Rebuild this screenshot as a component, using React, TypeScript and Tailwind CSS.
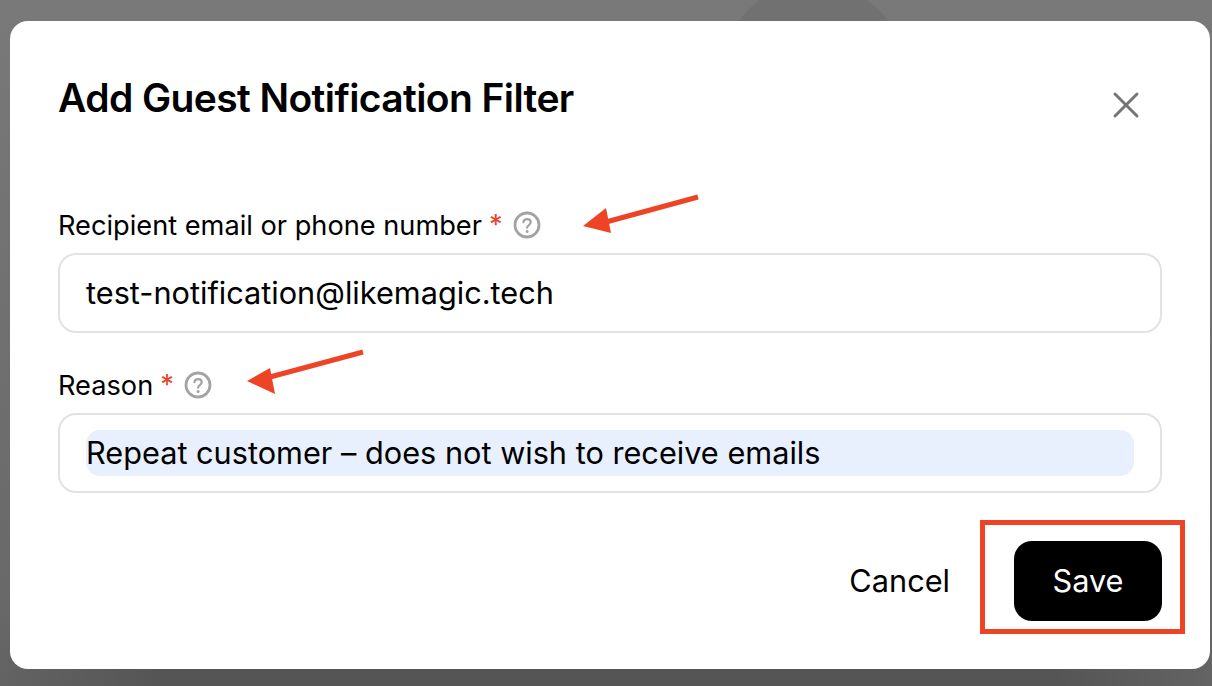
import { X } from 'lucide-react';

function HelpIcon() {
  return (
    <svg width="28" height="28" viewBox="0 0 28 28" fill="none" className="shrink-0">
      <circle cx="14" cy="14" r="12" stroke="#a3a3a3" strokeWidth="2.8" />
      <path
        d="M10.4 11.2c.3-2 1.8-3.1 3.7-3.1 2.1 0 3.6 1.3 3.6 3.1 0 1.5-.9 2.2-1.9 2.9-1 .7-1.7 1.2-1.7 2.6"
        stroke="#a3a3a3"
        strokeWidth="2.2"
        strokeLinecap="round"
      />
      <circle cx="14.1" cy="20.4" r="1.5" fill="#a3a3a3" />
    </svg>
  );
}

function Field({ label, value, selected }: { label: string; value: string; selected?: boolean }) {
  return (
    <div>
      <div className="flex h-[28px] items-center text-[27.2px] leading-[28px] text-black">
        <span className="pt-[2px]">{label}</span>
        <span className="ml-[7px] text-[#e8432a]">*</span>
        <span className="ml-[10px]">
          <HelpIcon />
        </span>
      </div>
      <div className="mt-[14px] flex h-[80px] items-center rounded-[18px] border-2 border-[#e2e2e2] pl-[26px] pr-[26px]">
        <div
          className={
            selected
              ? 'w-full rounded-[14px] bg-[#e8f0fe] text-[30.7px] leading-[46px] text-black'
              : 'w-full text-[30.7px] leading-[46px] text-black'
          }
        >
          {value}
        </div>
      </div>
    </div>
  );
}

export default function App() {
  return (
    <div className="relative flex h-[686px] w-[1212px] flex-col overflow-hidden bg-[radial-gradient(ellipse_640px_220px_at_50%_100%,#555555_70%,transparent_100%),linear-gradient(to_bottom,#797979,#666666)] px-[10px] pt-[21px] font-['Inter','Liberation_Sans',sans-serif]">
      {/* dimmed shape behind the dialog */}
      <div className="absolute left-[721px] top-[-17px] h-[185px] w-[185px] rounded-full bg-[#717171]" />

      <div className="relative h-[648px] w-[1200px] rounded-[18px] bg-white px-[48px]">
        <div className="flex items-start justify-between pt-[52px]">
          <h1 className="text-[39px] font-semibold leading-[50px] tracking-[-0.6px] text-black">
            Add Guest Notification Filter
          </h1>
          <button className="mr-[14px] mt-[10px] text-[#757575]">
            <X size={44} strokeWidth={1.6} />
          </button>
        </div>

        <div className="mt-[84px] flex flex-col gap-[38px]">
          <Field label="Recipient email or phone number" value="test-notification@likemagic.tech" />
          <Field label="Reason" value="Repeat customer – does not wish to receive emails" selected />
        </div>

        <div className="mt-[48px] flex items-center justify-end">
          <button className="mr-[64px] text-[30.7px] text-black">Cancel</button>
          <button className="h-[80px] w-[148px] rounded-[18px] bg-black text-[30.7px] text-white">Save</button>
        </div>
      </div>

      {/* annotations */}
      <svg width="1212" height="686" viewBox="0 0 1212 686" fill="none" className="pointer-events-none absolute left-0 top-0">
        <path d="M698 197 L606 222" stroke="#ee4426" strokeWidth="5" />
        <path d="M583 226 L606 208 L611 233 Z" fill="#ee4426" />
        <path d="M363 352 L270 377" stroke="#ee4426" strokeWidth="5" />
        <path d="M247 381 L270 368 L275 394 Z" fill="#ee4426" />
        <rect x="982.5" y="522.5" width="200" height="109" stroke="#ee4426" strokeWidth="5" />
      </svg>
    </div>
  );
}
